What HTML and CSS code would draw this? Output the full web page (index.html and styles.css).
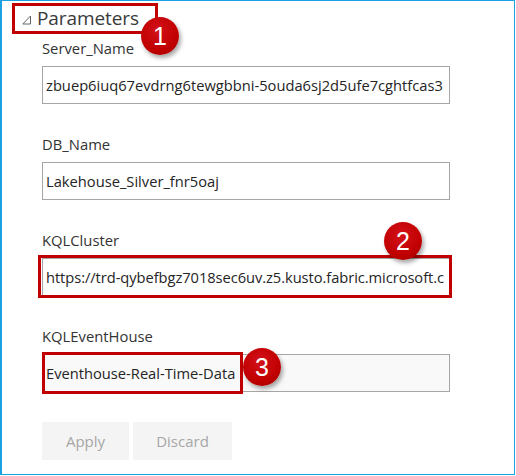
FILE: index.html
```html
<!DOCTYPE html>
<html>
<head>
<meta charset="utf-8">
<link rel="stylesheet" href="styles.css">
</head>
<body>
<div class="window">
  <div class="section-head">
    <svg class="tri" width="10" height="10" viewBox="0 0 10 10"><path d="M8.5 1 L8.5 9 L0.8 9 Z" fill="none" stroke="#666" stroke-width="1"/></svg>
    <span class="section-title">Parameters</span>
  </div>
  <div class="fields">
    <div class="field">
      <div class="label">Server_Name</div>
      <div class="input"><span class="input-text">zbuep6iuq67evdrng6tewgbbni-5ouda6sj2d5ufe7cghtfcas3</span></div>
    </div>
    <div class="field">
      <div class="label">DB_Name</div>
      <div class="input"><span class="input-text">Lakehouse_Silver_fnr5oaj</span></div>
    </div>
    <div class="field">
      <div class="label">KQLCluster</div>
      <div class="input annotated-full"><span class="input-text tight">https://trd-qybefbgz7018sec6uv.z5.kusto.fabric.microsoft.c</span></div>
    </div>
    <div class="field">
      <div class="label">KQLEventHouse</div>
      <div class="input input-grey"><span class="input-text"><span class="annotated-text">Eventhouse-Real-Time-Data</span></span></div>
    </div>
  </div>
  <div class="buttons">
    <div class="btn btn-apply">Apply</div>
    <div class="btn btn-discard">Discard</div>
  </div>
  <div class="callout c1">1</div>
  <div class="callout c2">2</div>
  <div class="callout c3">3</div>
</div>
</body>
</html>
```

FILE: styles.css
```css
html, body {
  margin: 0;
  padding: 0;
  background: #ffffff;
}

.window {
  position: relative;
  box-sizing: border-box;
  width: 515px;
  height: 475px;
  border: 1px solid #1ba1e2;
  border-left-width: 2px;
  font-family: "Open Sans", "Noto Sans", sans-serif;
  color: #333333;
  overflow: hidden;
}

.section-head {
  display: inline-flex;
  align-items: center;
  margin: 2px 0 0 10px;
  padding: 0 16px 0 7px;
  height: 25px;
  border: 3px solid #c00000;
}

.tri {
  margin-right: 5px;
  margin-top: 2px;
}

.section-title {
  font-size: 19px;
  line-height: 25px;
  color: #3a3a3a;
  letter-spacing: -0.1px;
}

.fields {
  display: flex;
  flex-direction: column;
  gap: 30px;
  padding: 4px 0 0 40px;
}

.field {
  display: flex;
  flex-direction: column;
  gap: 8px;
}

.label {
  font-size: 14.8px;
  line-height: 20px;
  color: #333333;
}

.input {
  position: relative;
  box-sizing: border-box;
  width: 408px;
  height: 38px;
  border: 1px solid #a6a6a6;
  background: #ffffff;
  display: flex;
  align-items: center;
  padding: 0 3px 0 3px;
  font-size: 14.7px;
  color: #252525;
}

.input-text {
  flex: 1;
  min-width: 0;
  white-space: nowrap;
  overflow: hidden;
  line-height: 36px;
}

.tight {
  letter-spacing: -0.06px;
}

.input-grey {
  background: #f9f9f9;
}

.annotated-full::after {
  content: "";
  position: absolute;
  left: -5px;
  top: -4px;
  right: -3px;
  bottom: -3px;
  border: 3px solid #c00000;
}

.input-grey .input-text {
  overflow: visible;
}

.annotated-text {
  position: relative;
}

.annotated-text::after {
  content: "";
  position: absolute;
  left: -4px;
  top: -11px;
  right: -8px;
  bottom: -11px;
  border: 3px solid #c00000;
}

.buttons {
  display: flex;
  gap: 4px;
  padding: 30px 0 0 40px;
}

.btn {
  height: 38px;
  display: flex;
  align-items: center;
  justify-content: center;
  background: #f4f4f4;
  color: #a6a6a6;
  font-size: 15px;
}

.btn-apply { width: 87px; }
.btn-discard { width: 99px; }

.callout {
  position: absolute;
  width: 38px;
  height: 38px;
  border-radius: 50%;
  background: radial-gradient(circle at 45% 35%, #d3121b 0%, #c00000 60%, #a00000 100%);
  box-shadow: 2px 3px 4px rgba(0, 0, 0, 0.35);
  color: #ffffff;
  font-family: "Liberation Sans", Arial, sans-serif;
  font-size: 25px;
  line-height: 38px;
  text-align: center;
}

.c1 { left: 139px; top: 16px; }
.c2 { left: 382px; top: 221px; }
.c3 { left: 241px; top: 347px; }
```
